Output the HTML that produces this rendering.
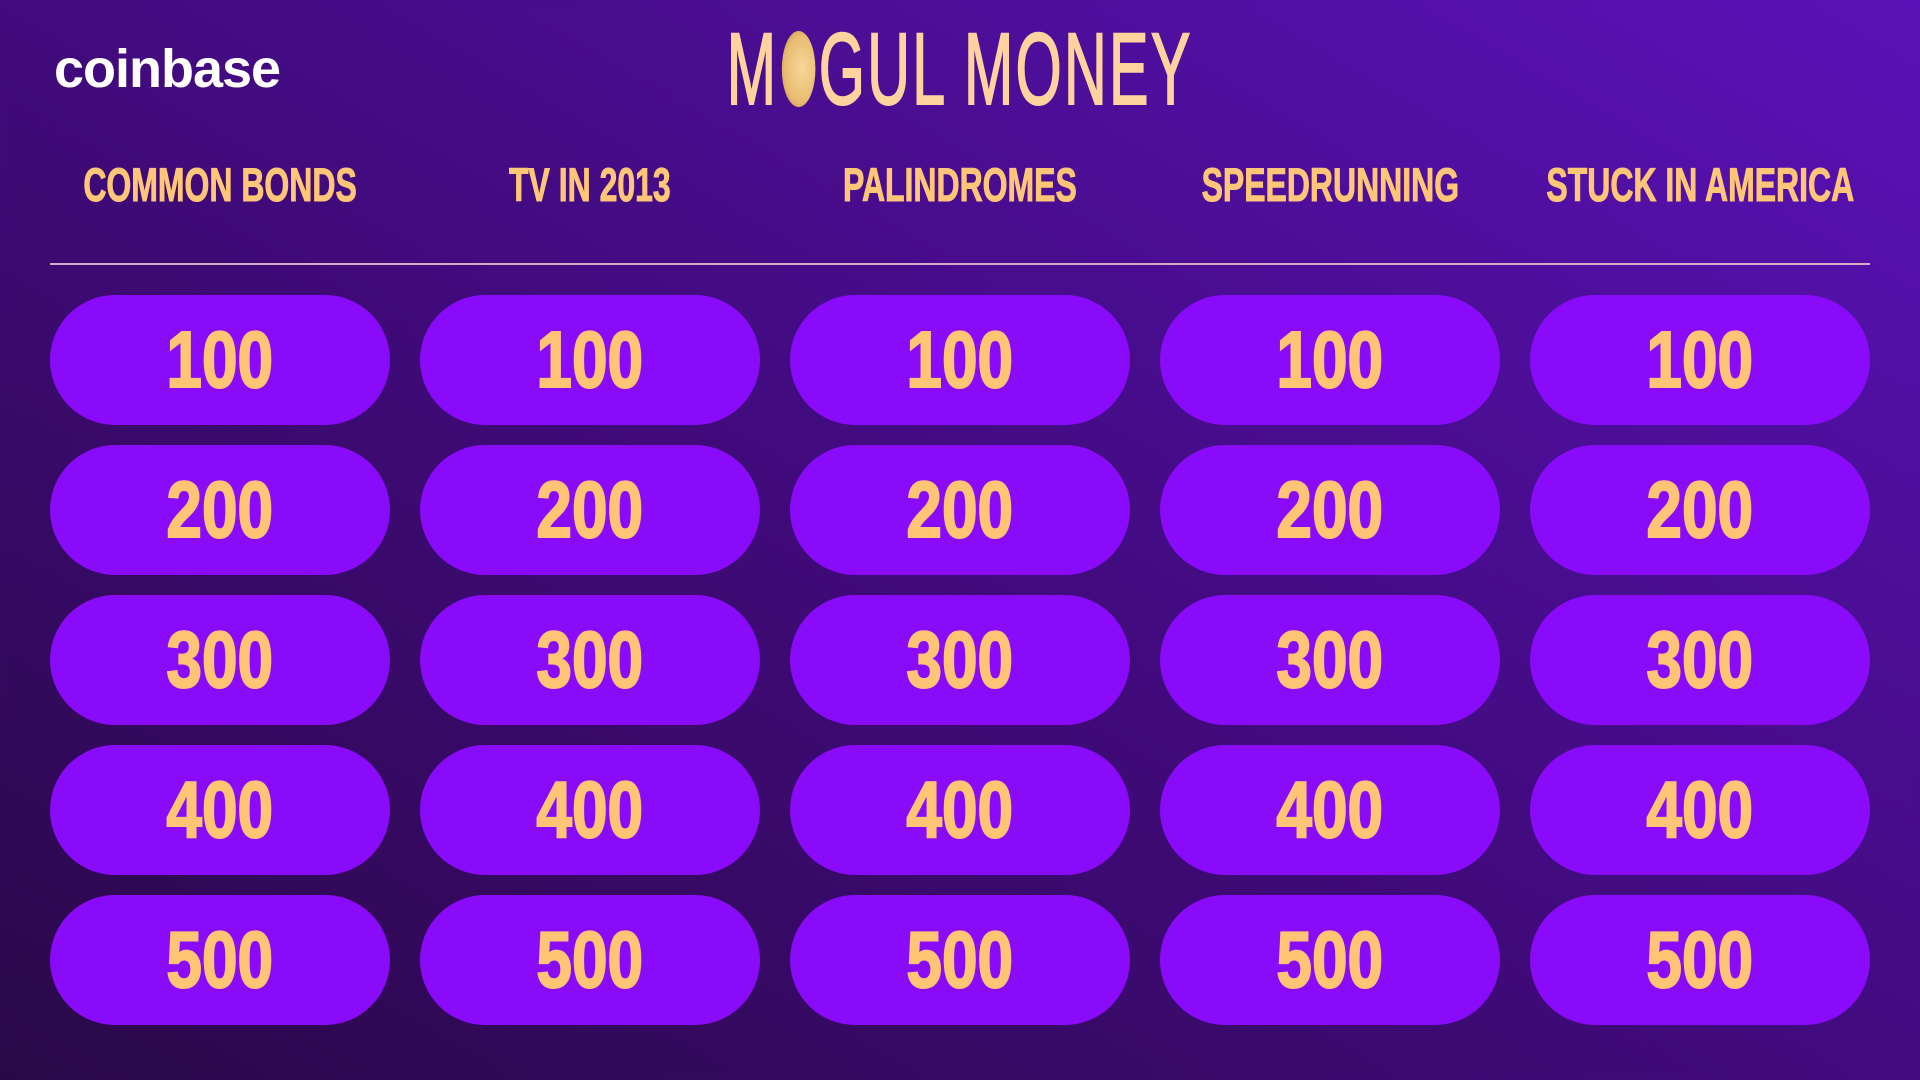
<!DOCTYPE html>
<html><head><meta charset="utf-8"><style>
html,body{margin:0;padding:0}
body{width:1920px;height:1080px;overflow:hidden;position:relative;
background:linear-gradient(30deg,#2a0848 0%,#3f0a78 45%,#5a12b8 100%);
font-family:"Liberation Sans",sans-serif}
.logo{position:absolute;left:54px;top:38px;color:#fff;font-size:54px;font-weight:bold;letter-spacing:-1px}
.title{position:absolute;left:0;width:1920px;top:14px;text-align:center;height:110px}
.title span.t{display:inline-block;font-size:102px;color:#ffd29e;transform:scaleX(0.58);transform-origin:center;line-height:110px;letter-spacing:4px;-webkit-text-stroke:2px #ffd29e}
.coin{display:inline-block;width:58px;height:76px;border-radius:50%;background:radial-gradient(ellipse at 60% 50%,#f8d69a 0%,#e9bd72 60%,#b88a3e 100%);vertical-align:-3px;margin:0 6px}
.hdr{position:absolute;top:160px;width:600px;text-align:center;height:50px}
.hdr span{display:inline-block;font-size:47px;font-weight:bold;color:#ffc677;transform:scaleX(0.68);white-space:nowrap;line-height:50px;-webkit-text-stroke:1px #ffc677}
.line{position:absolute;left:50px;width:1820px;top:263px;height:2px;background:#d9a9c8}
.btn{position:absolute;width:340px;height:130px;border-radius:65px;background:#8a0bfa;text-align:center}
.btn span{display:inline-block;font-size:80px;font-weight:bold;color:#ffc474;transform:scaleX(0.8);line-height:130px;-webkit-text-stroke:2px #ffc474}
</style></head><body>
<div class="logo">coinbase</div>
<div class="title"><span class="t">M<span class="coin"></span>GUL MONEY</span></div>
<div class="hdr" style="left:-80px"><span>COMMON BONDS</span></div>
<div class="hdr" style="left:290px"><span>TV IN 2013</span></div>
<div class="hdr" style="left:660px"><span>PALINDROMES</span></div>
<div class="hdr" style="left:1030px"><span>SPEEDRUNNING</span></div>
<div class="hdr" style="left:1400px"><span>STUCK IN AMERICA</span></div>
<div class="line"></div>
<div id="g"></div>
<script>
var g=document.getElementById('g'),h='';
for(var r=0;r<5;r++)for(var c=0;c<5;c++){h+='<div class="btn" style="left:'+(50+c*370)+'px;top:'+(295+r*150)+'px"><span>'+((r+1)*100)+'</span></div>';}
g.innerHTML=h;
</script>
</body></html>
